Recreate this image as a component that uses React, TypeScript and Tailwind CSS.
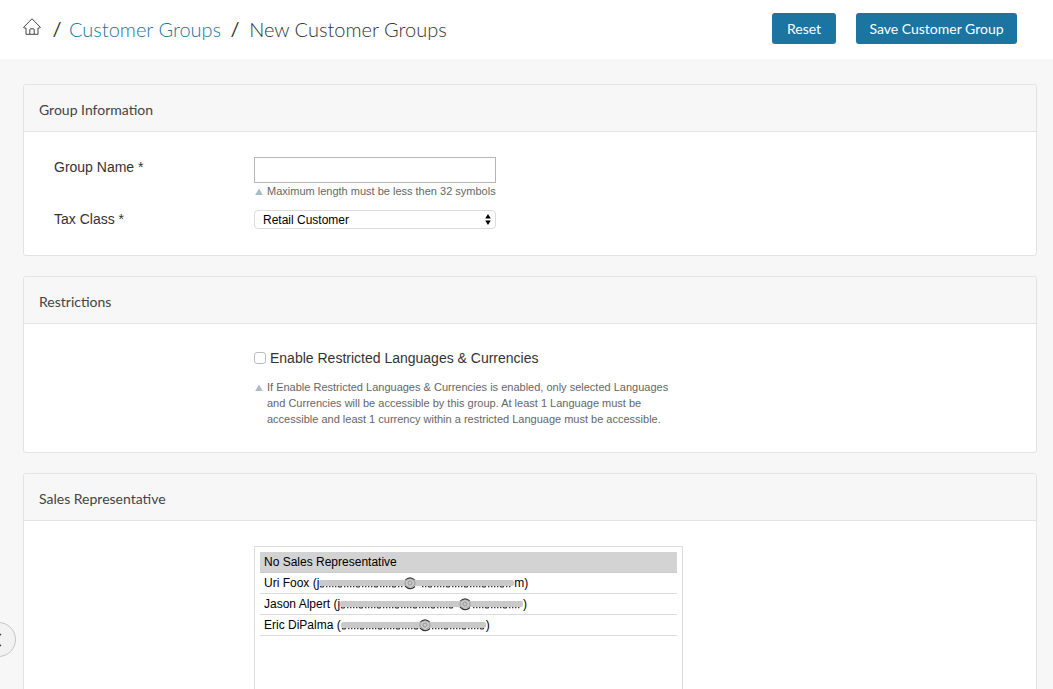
import React from "react";

const sans = "font-['Liberation_Sans',Arial,sans-serif]";
const heading = "font-['Lato','Open_Sans',sans-serif]";

function HomeIcon() {
  return (
    <svg viewBox="0 0 18 17" className="h-[17px] w-[18px]" fill="none" stroke="#444" strokeWidth="1" aria-hidden="true">
      <path d="M0.6 9.3 9 0.8l8.4 8.5-.7.7H15v6.3H3V10H1.2z" strokeLinejoin="round" />
      <path d="M6.8 16.2v-4.6q0-.8.8-.8h2.8q.8 0 .8.8v4.6" />
    </svg>
  );
}

function Panel({ title, bodyClass, children }: { title: string; bodyClass: string; children: React.ReactNode }) {
  return (
    <section className="rounded-[3px] border border-[#e3e3e3] bg-white">
      <h2 className={`flex h-[47px] items-center rounded-t-[3px] border-b border-[#e3e3e3] bg-[#f7f7f7] px-[15px] pt-1 text-sm text-[#444] ${heading}`}>
        {title}
      </h2>
      <div className={bodyClass}>{children}</div>
    </section>
  );
}

function Hint({ id, children }: { id: string; children: React.ReactNode }) {
  return (
    <p id={id} className="flex gap-1 text-[11px] leading-4 text-[#666]">
      <svg viewBox="0 0 9 16" className="h-4 w-[9px] shrink-0" fill="#a9bdc5" aria-hidden="true">
        <path d="M5 5.6 8.8 12H1.2z" />
      </svg>
      <span>{children}</span>
    </p>
  );
}

const representatives = [
  { name: "Uri Foox", start: "j", end: "m", width: 195, at: 86 },
  { name: "Jason Alpert", start: "j", end: "", width: 183, at: 120 },
  { name: "Eric DiPalma", start: "", end: "", width: 145, at: 79 },
];

function Redaction({ width, at }: { width: number; at: number }) {
  const marks = Array.from({ length: Math.floor(width / 6) }, (_, i) => i * 6 + 1).filter((x) => x < at - 5 || x > at + 11);
  return (
    <svg width={width} height="16" viewBox={`0 0 ${width} 16`} className="shrink-0" role="img" aria-label="hidden address">
      <g fill="none" stroke="#333" strokeWidth="1.2">
        {marks.map((x, i) => (
          <path key={x} d={i % 3 === 0 ? `M${x} 11.2q2 1.6 4 0` : `M${x} 11.6h1.4M${x + 3} 11.6h1.4`} />
        ))}
        <path d={`M${at} 5.5q5-5 10 0M${at} 11q5 5 10 .5`} />
      </g>
      <rect x="0" y="5" width={width} height="6" rx="2" fill="#c9c9c9" />
      <path d={`M${at} 8q0-4 5-4t5 4-5 4-5-4m3 0q0-2 2-2t2 2-2 2-2-2`} fill="none" stroke="#999" />
    </svg>
  );
}

export default function App() {
  return (
    <div className={`min-h-screen overflow-x-hidden bg-[#f7f7f7] text-[#333] ${sans}`}>
      <header className="flex h-[59px] items-center justify-between bg-white pr-9 pl-[23px]">
        <nav aria-label="Breadcrumb" className={`flex items-center pb-[3px] text-xl text-[#333] ${heading} font-light`}>
          <a href="#home" aria-label="Home" className="pb-1"><HomeIcon /></a>
          <span className="w-7 pl-1 text-center font-normal">/</span>
          <a href="#groups" className="pt-[2px] text-[#1b75a0]">Customer Groups</a>
          <span className="w-7 text-center font-normal">/</span>
          <h1 className="pt-[2px]">New Customer Groups</h1>
        </nav>
        <div className={`flex gap-5 pb-[2px] text-sm text-white ${heading}`}>
          <button type="button" className="h-[31px] w-16 rounded-[3px] bg-[#1b75a0] pt-px">Reset</button>
          <button type="button" className="h-[31px] w-[161px] rounded-[3px] bg-[#1b75a0] pt-px">Save Customer Group</button>
        </div>
      </header>

      <main className="flex flex-col gap-5 pt-[25px] pr-4 pb-6 pl-[23px]">
        <Panel title="Group Information" bodyClass="px-[30px] pt-[25px] pb-[26px]">
          <div className="flex">
            <label htmlFor="group-name" className="w-[200px] shrink-0 text-sm">Group Name *</label>
            <div>
              <input id="group-name" type="text" aria-describedby="name-hint" className="block h-[26px] w-[242px] border border-[#b5b5b5] px-1 text-xs" />
              <Hint id="name-hint">Maximum length must be less then 32 symbols</Hint>
            </div>
          </div>
          <div className="mt-[11px] flex h-[19px]">
            <label htmlFor="tax-class" className="w-[200px] shrink-0 text-sm leading-[18px]">Tax Class *</label>
            <div className="relative">
              <select id="tax-class" className="block h-[19px] w-[242px] appearance-none rounded-[4px] border border-[#dcdcdc] bg-white px-2 text-xs leading-4 text-black">
                <option>Retail Customer</option>
              </select>
              <svg viewBox="0 0 6 11" className="pointer-events-none absolute top-1 right-[5px] h-[11px] w-[6px]" aria-hidden="true">
                <path d="M3 0 5.8 4.5H.2zM.2 6.5h5.6L3 11z" />
              </svg>
            </div>
          </div>
        </Panel>

        <Panel title="Restrictions" bodyClass="pt-6 pr-[30px] pb-[25px] pl-[230px]">
          <label className="flex items-center gap-1 text-sm">
            <input type="checkbox" className="h-3 w-3 appearance-none rounded-[3px] border border-[#bcbcbc] bg-white checked:bg-[#1b75a0]" />
            Enable Restricted Languages &amp; Currencies
          </label>
          <div className="mt-[11px] max-w-[420px]">
            <Hint id="restriction-hint">
              If Enable Restricted Languages &amp; Currencies is enabled, only selected Languages and Currencies will be accessible by this group. At least 1 Language must be accessible and least 1 currency within a restricted Language must be accessible.
            </Hint>
          </div>
        </Panel>

        <Panel title="Sales Representative" bodyClass="pt-[25px] pr-[30px] pb-6 pl-[230px]">
          <ul role="listbox" aria-label="Sales Representative" className="h-[200px] max-w-[429px] overflow-y-auto border border-[#dcdcdc] p-[5px] text-xs text-black">
            <li role="option" aria-selected="true" className="flex h-[21px] items-center border-b border-[#cdcdcd] bg-[#d3d3d3] px-1">No Sales Representative</li>
            {representatives.map((r) => (
              <li key={r.name} role="option" aria-selected="false" className="flex h-[21px] items-center border-b border-[#dcdcdc] px-1">
                <span>{r.name} ({r.start}</span>
                <Redaction width={r.width} at={r.at} />
                <span>{r.end})</span>
              </li>
            ))}
          </ul>
        </Panel>
      </main>

      <button type="button" aria-label="Collapse menu" className="fixed bottom-8 -left-[19px] flex h-[35px] w-[35px] items-center justify-end rounded-full border border-[#c4c4c4] bg-[#f2f2f2] pr-[13px]">
        <svg viewBox="0 0 8 14" className="h-[14px] w-2" fill="none" stroke="#444" strokeWidth="1.4" aria-hidden="true">
          <path d="M7 1 1 7l6 6" />
        </svg>
      </button>
    </div>
  );
}
